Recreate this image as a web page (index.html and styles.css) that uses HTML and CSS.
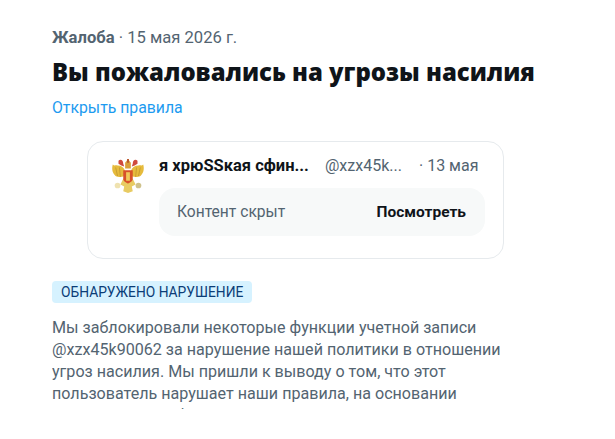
FILE: index.html
```html
<!DOCTYPE html>
<html lang="ru">
<head>
<meta charset="utf-8">
<title>Жалоба</title>
<link rel="stylesheet" href="styles.css">
</head>
<body>
<main class="page">
  <p class="meta"><b>Жалоба</b> · 15 мая 2026 г.</p>
  <h1 class="title">Вы пожаловались на угрозы насилия</h1>
  <a class="rules" href="#">Открыть правила</a>
  <section class="card">
    <svg class="avatar" viewBox="0 0 40 40" aria-hidden="true">
      <circle cx="20" cy="20" r="20" fill="#fff"/>
      <path d="M17 20C13 21 8 22 6 19C3 16 3 11 4 8C6 10 7 8 9 9C13 9 16 11 17 15Z" fill="#e6bb3c"/>
      <path d="M23 20C27 21 32 22 34 19C37 16 37 11 36 8C34 10 33 8 31 9C27 9 24 11 23 15Z" fill="#e6bb3c"/>
      <path d="M7 11L9 20M11 11L12 21M33 11L31 20M29 11L28 21" stroke="#b98f2c" stroke-width="1" fill="none" opacity=".7"/>
      <path d="M15 23H25L28 29L24 31L25 36L20 38L15 36L16 31L12 29Z" fill="#e8cb62"/>
      <path d="M15 14H25V23C25 26 22 27 20 28C18 27 15 26 15 23Z" fill="#d8512a"/>
      <path d="M18 16H22V25H18Z" fill="#f0c95a"/>
      <path d="M10 4C12 2 15 3 15 7L16 10L13 9L10 7Z" fill="#cf4a3c"/>
      <path d="M30 4C28 2 25 3 25 7L24 10L27 9L30 7Z" fill="#cf4a3c"/>
      <path d="M17 6L20 2L23 6L23 12H17Z" fill="#d9a03a"/>
      <path d="M19 2H21V6H19Z" fill="#b8562c"/>
      <circle cx="9" cy="30" r="3" fill="#efe2b0"/>
      <circle cx="31" cy="30" r="3" fill="#cfc28c"/>
    </svg>
    <div class="card-body">
      <div class="head">
        <span class="name">я хрюSSкая сфин...</span>
        <span class="handle">@xzx45k...</span>
        <span class="date">· 13 мая</span>
      </div>
      <div class="hidden-box">
        <span class="hidden-text">Контент скрыт</span>
        <span class="view">Посмотреть</span>
      </div>
    </div>
  </section>
  <span class="badge">ОБНАРУЖЕНО НАРУШЕНИЕ</span>
  <div class="clip">
    <p class="body-text">Мы заблокировали некоторые функции учетной записи @xzx45k90062 за нарушение нашей политики в отношении угроз насилия. Мы пришли к выводу о том, что этот пользователь нарушает наши правила, на основании содержимого публикации</p>
  </div>
</main>
</body>
</html>
```
FILE: styles.css
```css
* { box-sizing: border-box; }
html, body { margin: 0; background: #fff; }
body { font-family: Roboto, "Open Sans", sans-serif; color: #0f1419; height: 439px; overflow: hidden; }
.page { padding: 28px 52px 0; width: 615px; }
.meta { margin: 0; font-size: 16.6px; line-height: 20px; color: #536471; }
.title { margin: 8px 0 0; font-family: "Open Sans", sans-serif; font-size: 23.9px; line-height: 32px; font-weight: 800; }
.rules { display: block; margin-top: 10px; font-size: 15.8px; line-height: 20px; color: #1d9bf0; text-decoration: none; }
.card { display: flex; width: 417px; height: 118px; margin: 23px 0 0 35px; padding: 12px 18px 0 21px; gap: 12px; border: 1px solid #e6eaed; border-radius: 16px; }
.avatar { width: 38px; height: 38px; flex: none; margin-top: 3px; }
.card-body { flex: 1; min-width: 0; }
.head { display: flex; font-size: 16px; line-height: 24px; }
.name { font-weight: 700; font-size: 16.5px; width: 166px; white-space: nowrap; }
.handle { color: #536471; width: 94px; white-space: nowrap; }
.date { color: #536471; white-space: nowrap; }
.hidden-box { display: flex; justify-content: space-between; align-items: center; height: 48px; margin-top: 10px; padding: 0 19px 0 18px; background: #f7f9f9; border-radius: 16px; font-size: 15.6px; }
.hidden-text { color: #536471; }
.view { font-weight: 700; font-size: 15.5px; }
.badge { display: inline-block; margin-top: 22px; padding: 0 9px; height: 22px; line-height: 22px; font-size: 13.8px; color: #0b3d77; background: #d6f2ff; border-radius: 4px; }
.clip { height: 92px; margin-top: 14px; overflow: hidden; }
.body-text { margin: 0; font-size: 16.1px; line-height: 22px; color: #536471; width: 470px; }
```
